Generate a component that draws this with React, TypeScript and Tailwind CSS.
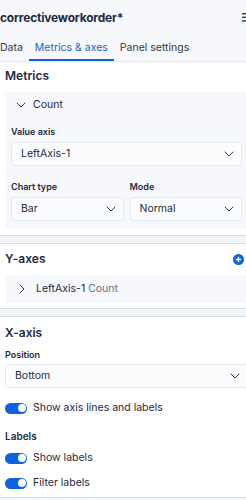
import React from 'react';
import { ChevronDown, ChevronRight } from 'lucide-react';

const Select = ({ value, className = '' }: { value: string; className?: string }) => (
  <div
    className={`flex h-[24px] items-center justify-between rounded-[3px] border border-[#e3e8f2] bg-[#fbfcfd] pl-[9px] pr-[4px] text-[10.5px] text-[#1d2a3e] ${className}`}
  >
    <span>{value}</span>
    <ChevronDown size={16} strokeWidth={1.5} className="text-[#343741]" />
  </div>
);

const Toggle = ({ label }: { label: string }) => (
  <div className="flex h-[16px] items-center gap-[6px] text-[10.5px]">
    <span className="flex h-[11px] w-[22px] items-center justify-end rounded-full bg-[#0b64dd] pr-[1.5px]">
      <span className="h-[8px] w-[8px] rounded-full bg-white" />
    </span>
    <span>{label}</span>
  </div>
);

const Label = ({ children }: { children: React.ReactNode }) => (
  <div className="h-[12px] text-[9px] font-semibold leading-[12px] text-[#1d2a3e]">{children}</div>
);

export default function App() {
  return (
    <div className="h-[500px] w-[246px] overflow-hidden bg-[#f1f4f9] font-['Inter',sans-serif] text-[#1d2a3e]">
      <div className="w-[253px]">
        {/* Header */}
        <div className="border-b border-[#e3e8f2] bg-[#f7f8fc]">
          <div className="flex h-[35px] items-center justify-between">
            <span className="text-[12px] font-bold tracking-[-0.2px]">correctiveworkorder*</span>
            <svg width="11" height="9" viewBox="0 0 11 9" className="text-[#343741]">
              <rect x="0" y="0" width="11" height="1.4" fill="currentColor" />
              <rect x="0" y="3.6" width="11" height="1.4" fill="currentColor" />
              <rect x="0" y="7.2" width="11" height="1.4" fill="currentColor" />
            </svg>
          </div>
          <div className="flex h-[26px] items-stretch text-[10.5px]">
            <div className="flex items-center pr-[6px] text-[#343741]">Data</div>
            <div className="flex items-center border-b-2 border-[#0b64dd] px-[6px] pt-[2px] text-[#1763c6]">
              Metrics &amp; axes
            </div>
            <div className="flex items-center px-[6px] text-[#343741]">Panel settings</div>
          </div>
        </div>

        {/* Metrics */}
        <div className="border-b border-[#d8dee8] bg-white px-[5px] pb-[6px] pt-[6px]">
          <div className="h-[16px] text-[12px] font-semibold leading-[16px]">Metrics</div>
          <div className="mt-[8px] rounded-[4px] bg-[#f6f8fc] pb-[8px]">
            <div className="flex h-[26px] items-center gap-[4px] pl-[8px] text-[10.5px]">
              <ChevronDown size={16} strokeWidth={1.5} className="text-[#343741]" />
              <span>Count</span>
            </div>
            <div className="px-[6px]">
              <div className="mt-[8px]">
                <Label>Value axis</Label>
              </div>
              <Select value="LeftAxis-1" className="mt-[4px]" />
              <div className="mt-[15px] grid grid-cols-2 gap-x-[6px]">
                <div>
                  <Label>Chart type</Label>
                  <Select value="Bar" className="mt-[4px]" />
                </div>
                <div>
                  <Label>Mode</Label>
                  <Select value="Normal" className="mt-[4px]" />
                </div>
              </div>
            </div>
          </div>
        </div>

        {/* Y-axes */}
        <div className="mt-[7px] border-y border-[#d8dee8] bg-white px-[5px] pb-[5px] pt-[7px]">
          <div className="flex h-[16px] items-center justify-between">
            <span className="text-[12px] font-semibold leading-[16px]">Y-axes</span>
            <svg width="11" height="11" viewBox="0 0 16 16" className="mr-[4px]">
              <circle cx="8" cy="8" r="8" fill="#0b64dd" />
              <path d="M8 4v8M4 8h8" stroke="white" strokeWidth="2" />
            </svg>
          </div>
          <div className="mt-[8px] flex h-[28px] items-center gap-[6px] rounded-[4px] bg-[#f6f8fc] pl-[9px] text-[10.5px]">
            <ChevronRight size={16} strokeWidth={1.5} className="text-[#343741]" />
            <span>
              LeftAxis-1 <span className="text-[#69707d]">Count</span>
            </span>
          </div>
        </div>

        {/* X-axis */}
        <div className="mt-[7px] border-y border-[#d8dee8] bg-white px-[5px] pb-[6px] pt-[8px]">
          <div className="h-[16px] text-[12px] font-semibold leading-[16px]">X-axis</div>
          <div className="mt-[8px]">
            <Label>Position</Label>
          </div>
          <Select value="Bottom" className="mt-[3px]" />
          <div className="mt-[12px]">
            <Toggle label="Show axis lines and labels" />
          </div>
          <div className="mt-[13px] h-[14px] text-[10px] font-semibold leading-[14px]">Labels</div>
          <div className="mt-[7px]">
            <Toggle label="Show labels" />
          </div>
          <div className="mt-[9px]">
            <Toggle label="Filter labels" />
          </div>
        </div>
      </div>
    </div>
  );
}
